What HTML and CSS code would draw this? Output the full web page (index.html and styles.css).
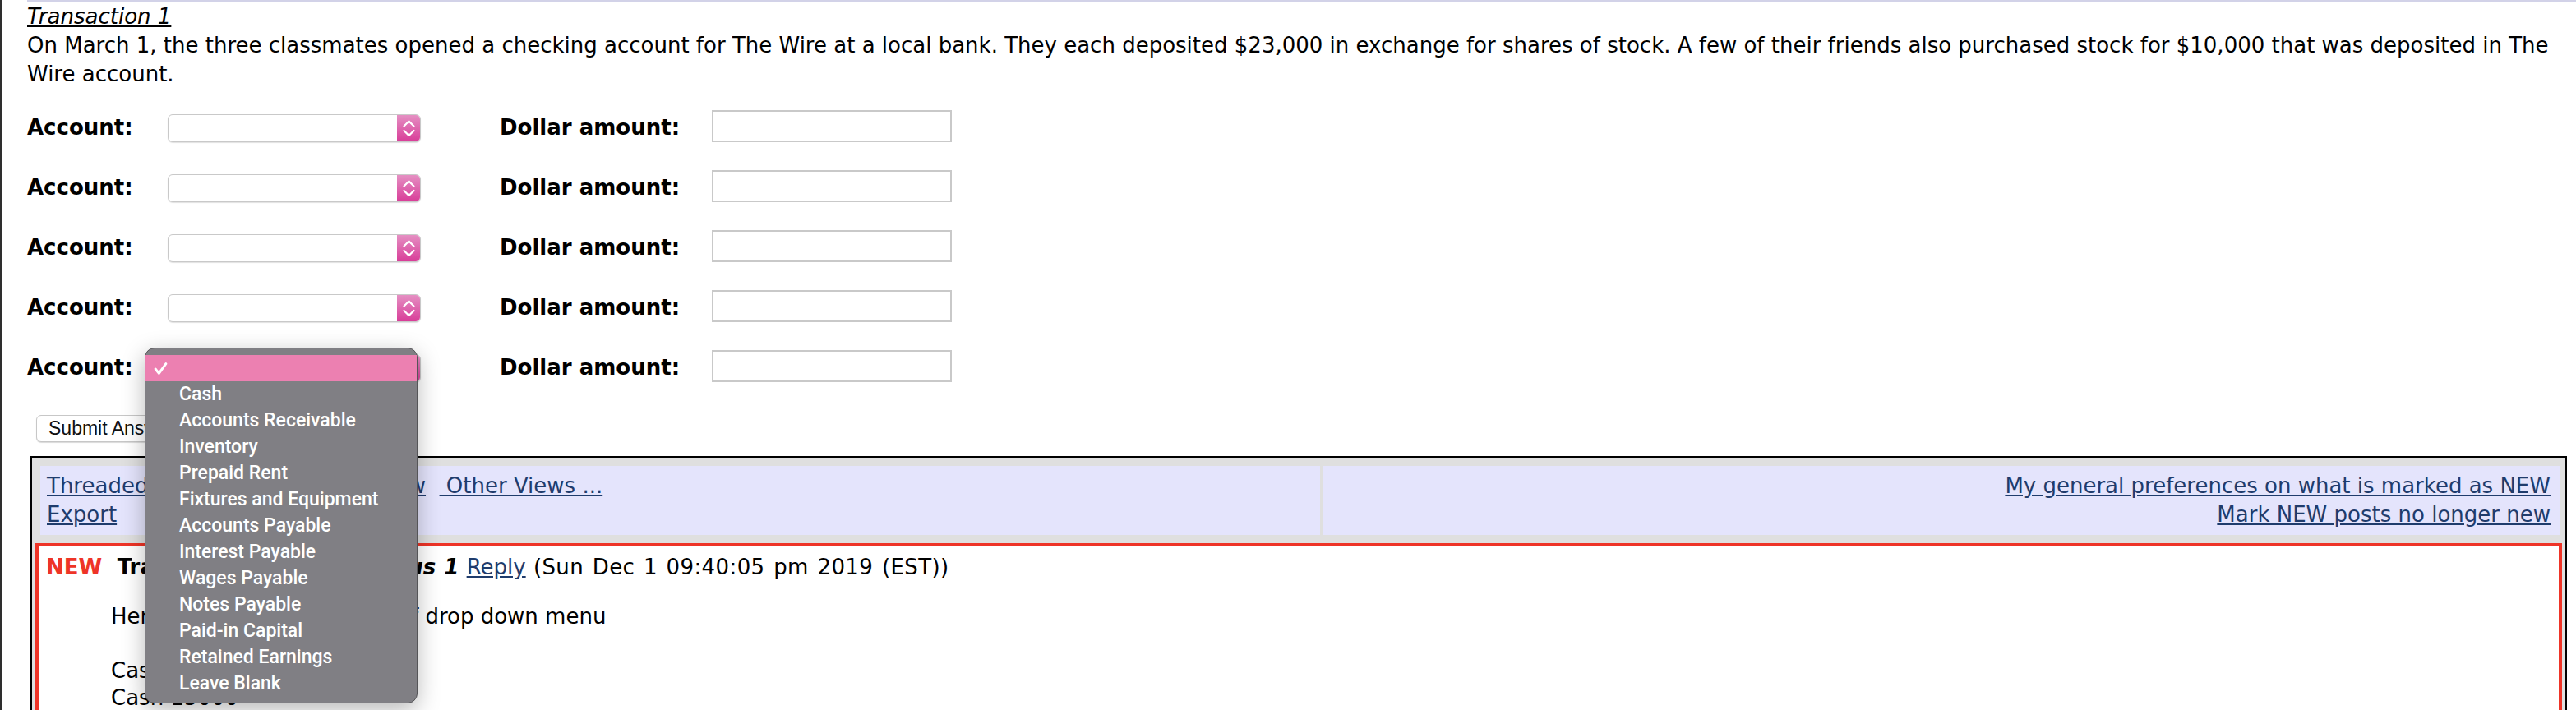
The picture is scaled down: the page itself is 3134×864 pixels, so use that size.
FILE: index.html
```html
<!DOCTYPE html>
<html lang="en">
<head>
<meta charset="utf-8">
<title>Transaction 1</title>
<link rel="stylesheet" href="styles.css">
</head>
<body>
<div class="page">
  <div class="question">
    <div class="title">Transaction 1</div>
    <p class="prompt">On March 1, the three classmates opened a checking account for The Wire at a local bank. They each deposited $23,000 in exchange for shares of stock. A few of their friends also purchased stock for $10,000 that was deposited in The Wire account.</p>

    <div class="entries">
      <span class="lbl">Account:</span>
      <div class="select"><span class="stepper"><svg viewBox="0 0 29 34" width="29" height="34"><path d="M8.5 14.5 L14.5 8.5 L20.5 14.5 M8.5 20 L14.5 26 L20.5 20" fill="none" stroke="#fff" stroke-width="2.2" stroke-linecap="round" stroke-linejoin="round"/></svg></span></div>
      <span class="lbl">Dollar amount:</span>
      <div class="amount"></div>

      <span class="lbl">Account:</span>
      <div class="select"><span class="stepper"><svg viewBox="0 0 29 34" width="29" height="34"><path d="M8.5 14.5 L14.5 8.5 L20.5 14.5 M8.5 20 L14.5 26 L20.5 20" fill="none" stroke="#fff" stroke-width="2.2" stroke-linecap="round" stroke-linejoin="round"/></svg></span></div>
      <span class="lbl">Dollar amount:</span>
      <div class="amount"></div>

      <span class="lbl">Account:</span>
      <div class="select"><span class="stepper"><svg viewBox="0 0 29 34" width="29" height="34"><path d="M8.5 14.5 L14.5 8.5 L20.5 14.5 M8.5 20 L14.5 26 L20.5 20" fill="none" stroke="#fff" stroke-width="2.2" stroke-linecap="round" stroke-linejoin="round"/></svg></span></div>
      <span class="lbl">Dollar amount:</span>
      <div class="amount"></div>

      <span class="lbl">Account:</span>
      <div class="select"><span class="stepper"><svg viewBox="0 0 29 34" width="29" height="34"><path d="M8.5 14.5 L14.5 8.5 L20.5 14.5 M8.5 20 L14.5 26 L20.5 20" fill="none" stroke="#fff" stroke-width="2.2" stroke-linecap="round" stroke-linejoin="round"/></svg></span></div>
      <span class="lbl">Dollar amount:</span>
      <div class="amount"></div>

      <span class="lbl">Account:</span>
      <div class="select"><span class="stepper"><svg viewBox="0 0 29 34" width="29" height="34"><path d="M8.5 14.5 L14.5 8.5 L20.5 14.5 M8.5 20 L14.5 26 L20.5 20" fill="none" stroke="#fff" stroke-width="2.2" stroke-linecap="round" stroke-linejoin="round"/></svg></span></div>
      <span class="lbl">Dollar amount:</span>
      <div class="amount"></div>
    </div>

    <button class="submit" type="button">Submit Answer</button>
  </div>

  <div class="board">
    <div class="board-head">
      <div class="head-cell head-left">
        <a href="#">Threaded</a> <a href="#" class="view-alt">Chronological View</a>&nbsp;&nbsp;<a href="#">&nbsp;Other Views ...</a><br>
        <a href="#">Export</a>
      </div>
      <div class="head-cell head-right">
        <a href="#">My general preferences on what is marked as NEW</a><br>
        <a href="#">Mark NEW posts no longer new</a>
      </div>
    </div>
    <div class="post">
      <div class="post-line"><span class="new">NEW</span>&nbsp; <b>Transaction 1</b>&nbsp; <b><i>Anonymous 1</i></b> <a href="#">Reply</a> <span class="stamp">(Sun Dec 1 09:40:05 pm 2019 (EST))</span></div>
      <div class="post-body">Here is the full screenshot of drop down menu<br><br>Cash 69000<br>Cash 15000<br><br>Thanks</div>
    </div>
  </div>

  <div class="popup-menu">
    <div class="menu-item selected"><svg class="check" viewBox="0 0 16 16" width="17" height="17"><path d="M2 8.5 L6 13.5 L14 2.5" fill="none" stroke="#fff" stroke-width="2.8" stroke-linecap="round" stroke-linejoin="round"/></svg></div>
    <div class="menu-item">Cash</div>
    <div class="menu-item">Accounts Receivable</div>
    <div class="menu-item">Inventory</div>
    <div class="menu-item">Prepaid Rent</div>
    <div class="menu-item">Fixtures and Equipment</div>
    <div class="menu-item">Accounts Payable</div>
    <div class="menu-item">Interest Payable</div>
    <div class="menu-item">Wages Payable</div>
    <div class="menu-item">Notes Payable</div>
    <div class="menu-item">Paid-in Capital</div>
    <div class="menu-item">Retained Earnings</div>
    <div class="menu-item">Leave Blank</div>
  </div>
</div>
</body>
</html>
```

FILE: styles.css
```css
html, body {
  margin: 0;
  padding: 0;
}

body {
  background: #ffffff;
  color: #000000;
  font-family: "DejaVu Sans", Verdana, sans-serif;
  font-size: 26px;
  border-left: 2px solid #2e2e2e;
  height: 864px;
  box-sizing: border-box;
  overflow: hidden;
}

.page {
  position: relative;
  margin-left: 31px;
  border-top: 3px solid #d2d2e8;
}

.title {
  font-style: italic;
  text-decoration: underline;
  line-height: 35px;
}

.prompt {
  margin: 0;
  line-height: 35px;
}

.entries {
  display: grid;
  grid-template-columns: 171px 404px 258px 292px;
  grid-auto-rows: 53.5px;
  row-gap: 19.5px;
  align-items: end;
  margin-top: 11.5px;
}

.lbl {
  font-weight: bold;
  line-height: 35px;
  white-space: nowrap;
}

.select {
  width: 308px;
  height: 34px;
  box-sizing: border-box;
  border: 1px solid #c9c9c9;
  border-radius: 6px;
  background: #ffffff;
  box-shadow: 0 1px 1px rgba(0, 0, 0, 0.12);
  display: flex;
  justify-content: flex-end;
  overflow: hidden;
}

.stepper {
  width: 29px;
  height: 34px;
  margin: -1px -1px -1px 0;
  background: linear-gradient(#e592c4, #d83b97);
  display: block;
}

.stepper svg {
  display: block;
}

.amount {
  width: 292px;
  height: 39px;
  box-sizing: border-box;
  border: 2px solid #c9c9c9;
  background: #ffffff;
}

.submit {
  display: block;
  margin: 40px 0 0 11px;
  height: 33px;
  padding: 0 14px;
  background: #ffffff;
  border: 1px solid #c7c7c7;
  border-radius: 6px;
  box-shadow: 0 1px 1px rgba(0, 0, 0, 0.15);
  font-family: "Liberation Sans", Arial, sans-serif;
  font-size: 23px;
  color: #111;
}

.board {
  margin: 17px 11px 0 4px;
  border: 2px solid #000000;
  background: #dfdfdf;
  padding: 4px;
}

.board-head {
  display: flex;
  gap: 4px;
  padding: 6px 3px 10px 6px;
}

.head-cell {
  background: #e4e4fc;
  padding: 7px 8px;
  line-height: 35px;
}

.head-left {
  width: 1557px;
  box-sizing: border-box;
  flex: none;
}

.head-right {
  flex: 1;
  text-align: right;
  padding-right: 11px;
}

a {
  color: #1f3c6c;
  text-decoration: underline;
}

.view-alt {
  margin-left: 82px;
}

.post {
  border: 4px solid #ee3427;
  background: #ffffff;
  padding: 7.5px 9px 20px;
}

.post-line {
  line-height: 35px;
  white-space: nowrap;
  word-spacing: 1px;
}

.stamp {
  word-spacing: 2px;
  letter-spacing: 0.4px;
}

.new {
  color: #ee3427;
  font-weight: bold;
}

.post-body {
  margin-top: 26px;
  padding-left: 79px;
  line-height: 33px;
}

.popup-menu {
  position: absolute;
  left: 143px;
  top: 420px;
  width: 332px;
  box-sizing: border-box;
  padding: 8px 0 7px;
  background: #807f84;
  border: 1px solid #555558;
  border-radius: 12px;
  box-shadow: 0 8px 28px rgba(0, 0, 0, 0.28);
  font-family: Roboto, "Noto Sans", sans-serif;
  font-weight: 500;
  font-size: 23px;
  color: #ffffff;
}

.menu-item {
  height: 32px;
  line-height: 32px;
  padding-left: 41px;
  white-space: nowrap;
}

.menu-item.selected {
  background: #ec80b1;
  padding-left: 10px;
  display: flex;
  align-items: center;
}

.check {
  display: block;
}
```
